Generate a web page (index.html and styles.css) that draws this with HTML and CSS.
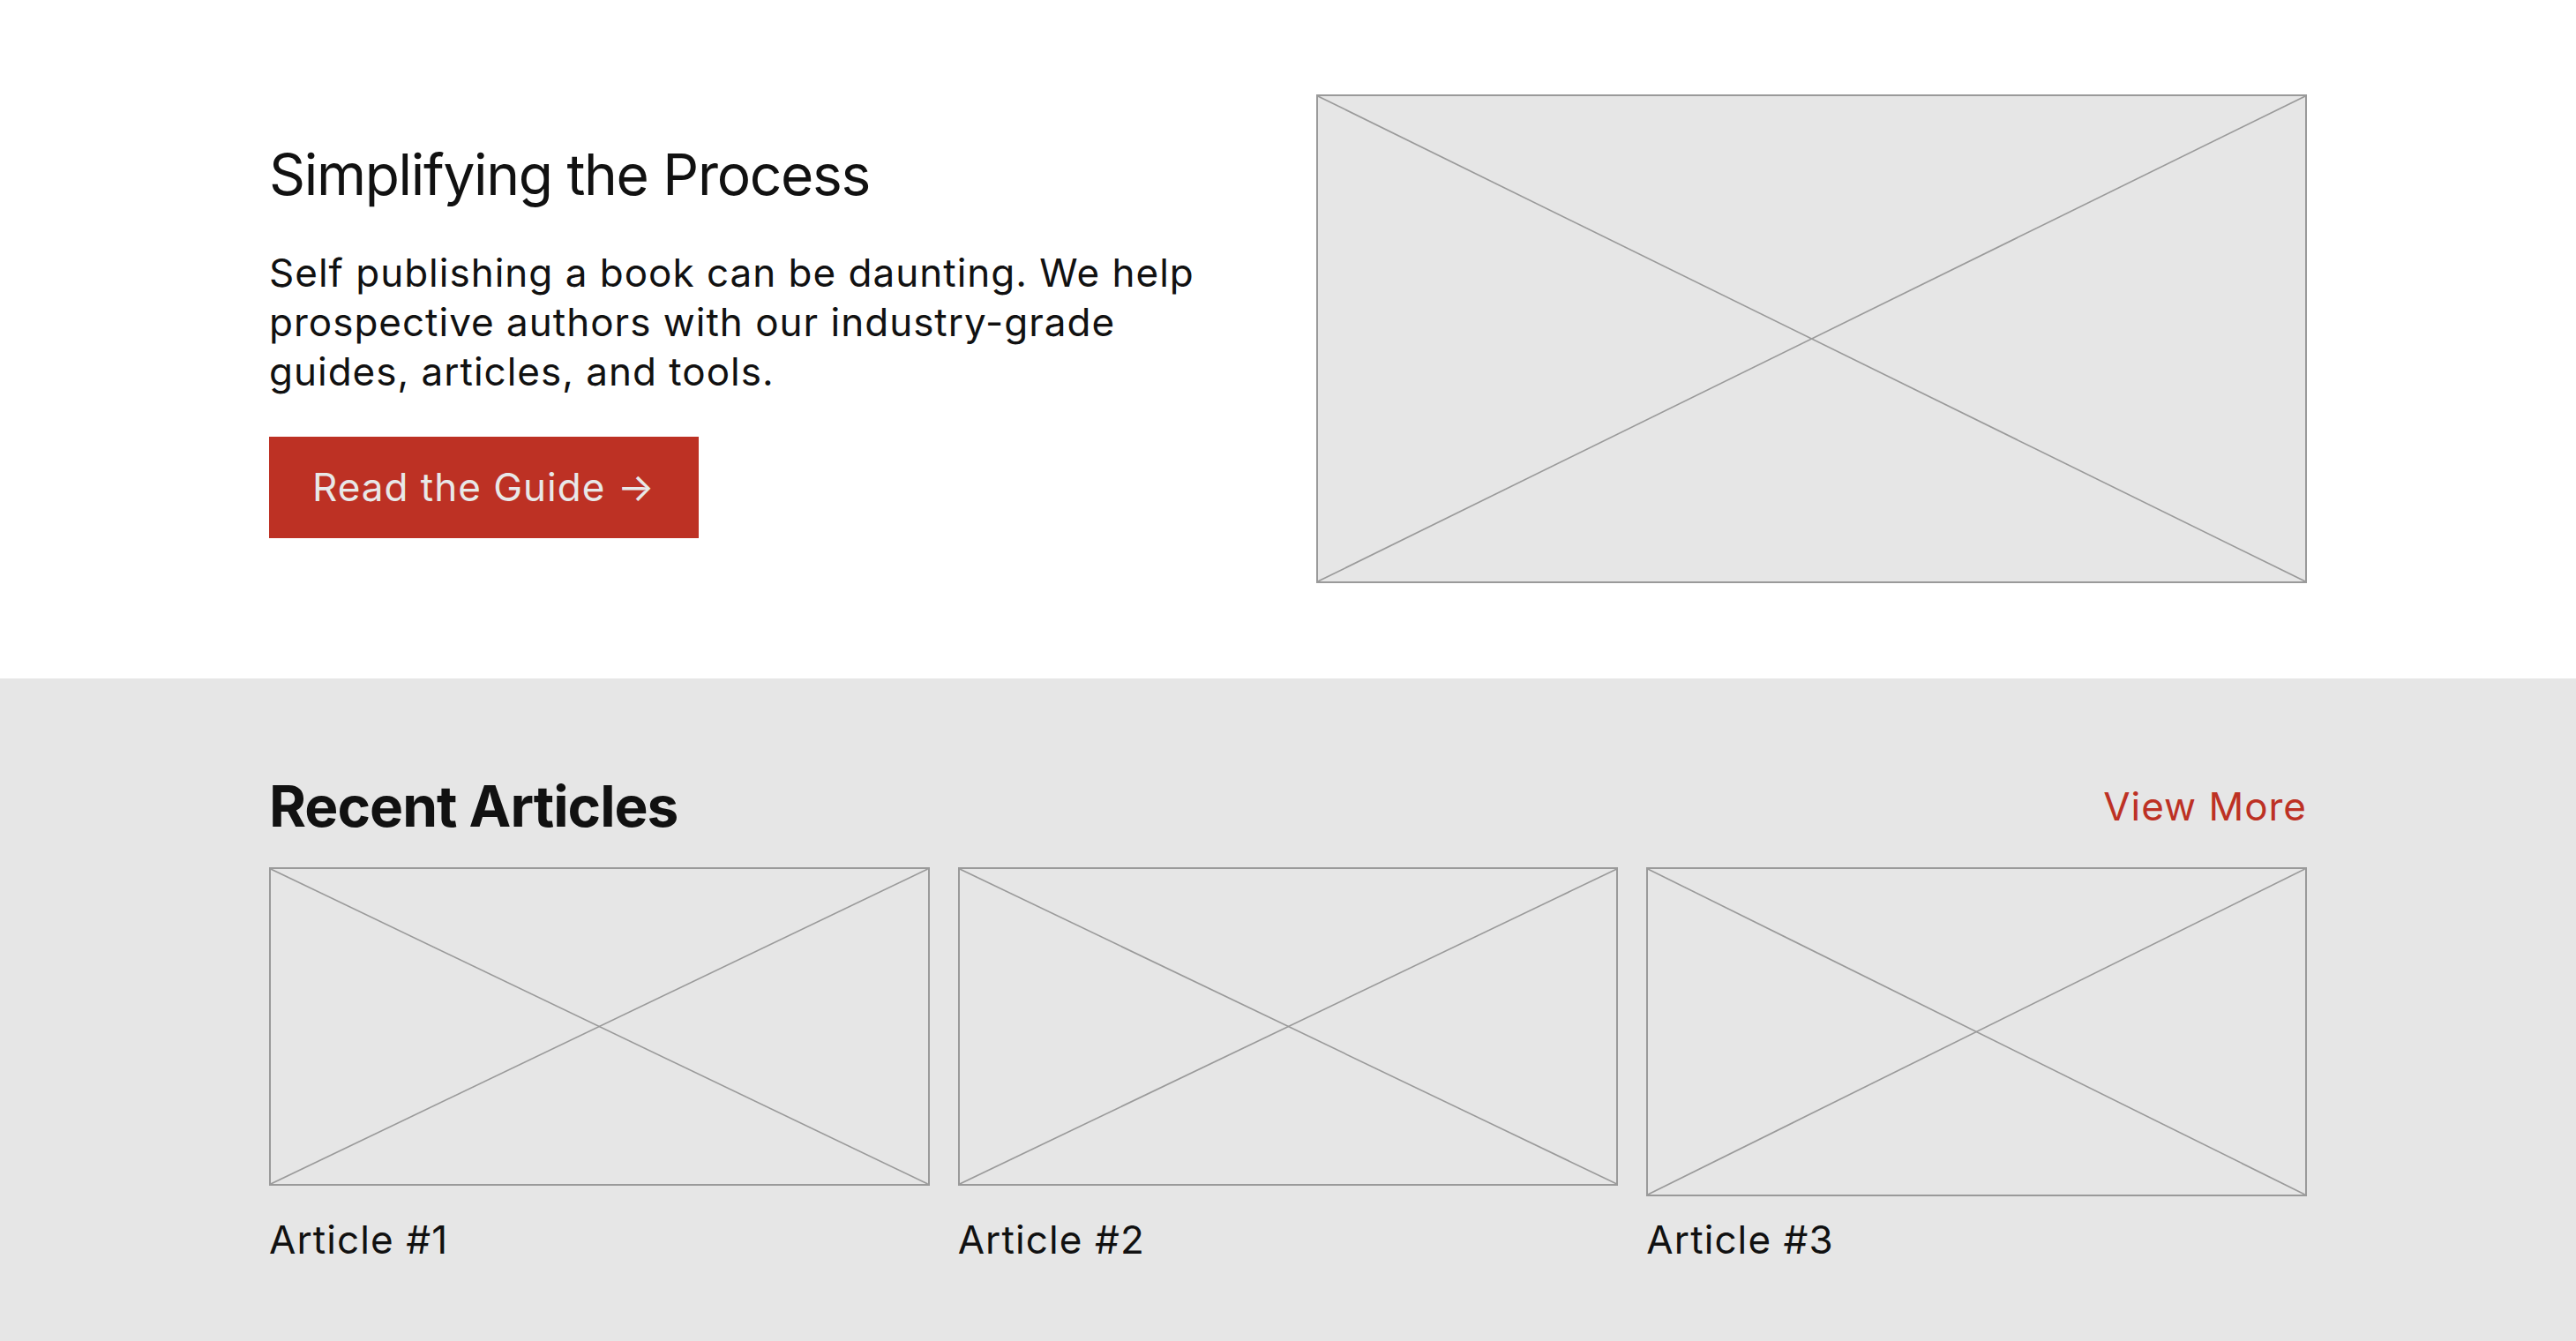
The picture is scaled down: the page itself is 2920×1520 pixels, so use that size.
FILE: index.html
```html
<!DOCTYPE html>
<html lang="en">
<head>
<meta charset="utf-8">
<title>Simplifying the Process</title>
<link rel="stylesheet" href="styles.css">
</head>
<body>
<section class="hero">
  <div class="container hero-grid">
    <div class="hero-text">
      <h1 class="hero-title">Simplifying the Process</h1>
      <p class="hero-copy">Self publishing a book can be daunting. We help prospective authors with our industry-grade guides, articles, and tools.</p>
      <a class="btn" href="#">Read the Guide →</a>
    </div>
    <div class="placeholder hero-img">
      <svg viewBox="0 0 100 100" preserveAspectRatio="none"><line x1="0" y1="0" x2="100" y2="100"/><line x1="100" y1="0" x2="0" y2="100"/></svg>
    </div>
  </div>
</section>
<section class="articles">
  <div class="container">
    <div class="articles-head">
      <h2 class="articles-title">Recent Articles</h2>
      <a class="view-more" href="#">View More</a>
    </div>
    <div class="cards">
      <div class="card">
        <div class="placeholder card-img">
          <svg viewBox="0 0 100 100" preserveAspectRatio="none"><line x1="0" y1="0" x2="100" y2="100"/><line x1="100" y1="0" x2="0" y2="100"/></svg>
        </div>
        <div class="card-label">Article #1</div>
      </div>
      <div class="card">
        <div class="placeholder card-img">
          <svg viewBox="0 0 100 100" preserveAspectRatio="none"><line x1="0" y1="0" x2="100" y2="100"/><line x1="100" y1="0" x2="0" y2="100"/></svg>
        </div>
        <div class="card-label">Article #2</div>
      </div>
      <div class="card">
        <div class="placeholder card-img tall">
          <svg viewBox="0 0 100 100" preserveAspectRatio="none"><line x1="0" y1="0" x2="100" y2="100"/><line x1="100" y1="0" x2="0" y2="100"/></svg>
        </div>
        <div class="card-label">Article #3</div>
      </div>
    </div>
  </div>
</section>
</body>
</html>
```

FILE: styles.css
```css
* { box-sizing: border-box; }
html, body { margin: 0; padding: 0; }
body {
  font-family: Inter, "Noto Sans", sans-serif;
  color: #111111;
  background: #ffffff;
}
.container {
  width: 2310px;
  margin: 0 auto;
}
.hero {
  padding: 107px 0 108px;
  background: #ffffff;
}
.hero-grid {
  display: grid;
  grid-template-columns: 1fr 1fr;
  column-gap: 64px;
  align-items: center;
}
.hero-text {
  display: flex;
  flex-direction: column;
  align-items: flex-start;
}
.hero-title {
  margin: 0;
  font-size: 64px;
  font-weight: 400;
  line-height: 77px;
  letter-spacing: -1.3px;
}
.hero-copy {
  margin: 45px 0 0;
  font-size: 44px;
  line-height: 56px;
  letter-spacing: 1px;
  max-width: 1100px;
}
.btn {
  margin-top: 46px;
  display: inline-block;
  background: #bd3124;
  color: #e8e8e8;
  text-decoration: none;
  font-size: 44px;
  line-height: 55px;
  letter-spacing: 1px;
  padding: 30px 49px;
}
.placeholder {
  background: #e6e6e6;
  border: 2px solid #9a9a9a;
}
.placeholder svg {
  display: block;
  width: 100%;
  height: 100%;
}
.placeholder line {
  stroke: #9a9a9a;
  stroke-width: 1.6;
  vector-effect: non-scaling-stroke;
}
.hero-img {
  height: 554px;
}
.articles {
  background: #e6e6e6;
  padding: 106px 0 108px;
}
.articles-head {
  display: flex;
  justify-content: space-between;
  align-items: center;
}
.articles-title {
  margin: 0;
  font-size: 64px;
  font-weight: 700;
  line-height: 77px;
  letter-spacing: -1px;
}
.view-more {
  color: #bd3124;
  text-decoration: none;
  font-size: 44px;
  line-height: 56px;
  letter-spacing: 1px;
}
.cards {
  margin-top: 31px;
  display: grid;
  grid-template-columns: repeat(3, 1fr);
  column-gap: 32px;
}
.card {
  display: flex;
  flex-direction: column;
  justify-content: space-between;
  gap: 21px;
}
.card-img {
  height: 361px;
}
.card-img.tall {
  height: 373px;
}
.card-label {
  font-size: 44px;
  line-height: 56px;
  letter-spacing: 1.1px;
}
```
